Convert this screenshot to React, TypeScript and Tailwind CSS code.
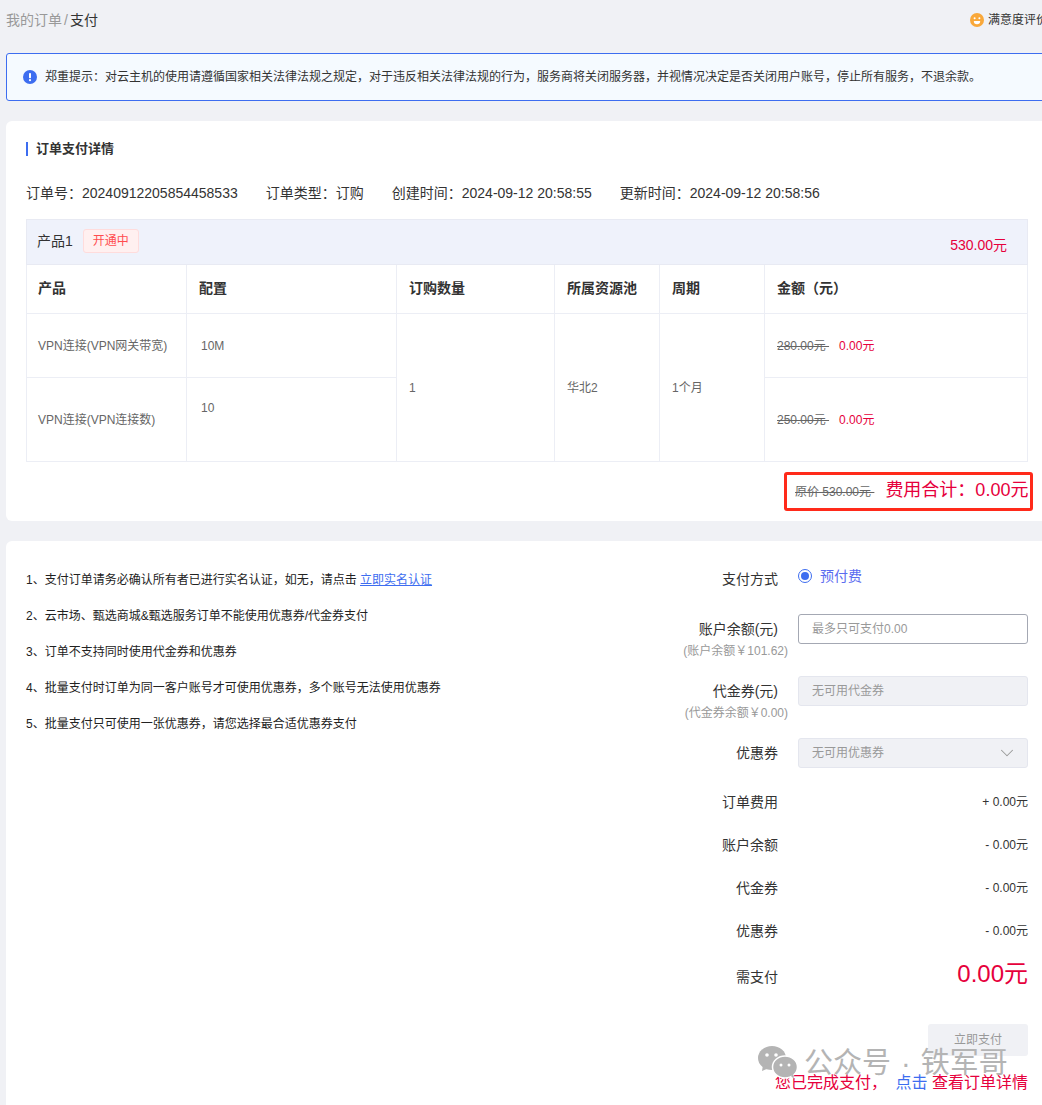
import { ChevronDown } from 'lucide-react';
import type { ReactNode } from 'react';

const notes = [
  '2、云市场、甄选商城&甄选服务订单不能使用优惠券/代金券支付',
  '3、订单不支持同时使用代金券和优惠券',
  '4、批量支付时订单为同一客户账号才可使用优惠券，多个账号无法使用优惠券',
  '5、批量支付只可使用一张优惠券，请您选择最合适优惠券支付',
];

const fees = [
  { label: '订单费用', value: '+ 0.00元' },
  { label: '账户余额', value: '- 0.00元' },
  { label: '代金券', value: '- 0.00元' },
  { label: '优惠券', value: '- 0.00元' },
];

function Smiley() {
  return (
    <svg width="14" height="14" viewBox="0 0 14 14">
      <circle cx="7" cy="7" r="7" fill="#f9a83a" />
      <circle cx="4.6" cy="5.2" r="1" fill="#fff" />
      <circle cx="9.4" cy="5.2" r="1" fill="#fff" />
      <path d="M3.8 8h6.4a3.2 3.2 0 0 1-6.4 0z" fill="#fff" />
    </svg>
  );
}

function InfoIcon() {
  return (
    <svg width="14" height="14" viewBox="0 0 14 14" className="shrink-0">
      <circle cx="7" cy="7" r="7" fill="#3d6df0" />
      <rect x="6" y="3" width="2" height="5.2" rx="0.8" fill="#fff" />
      <circle cx="7" cy="10.2" r="1.1" fill="#fff" />
    </svg>
  );
}

function WechatLogo() {
  return (
    <svg width="39" height="33" viewBox="0 0 39 33">
      <ellipse cx="14" cy="12" rx="14" ry="12" fill="#b4b4b4" />
      <path d="M5 19l-1 6 7-3z" fill="#b4b4b4" />
      <ellipse cx="27" cy="21" rx="12.5" ry="11" fill="#b4b4b4" stroke="#fff" strokeWidth="1.5" />
      <path d="M33 30l3 3-1-6z" fill="#b4b4b4" />
      <circle cx="9" cy="9" r="1.8" fill="#fff" />
      <circle cx="18" cy="9" r="1.8" fill="#fff" />
      <circle cx="23" cy="19" r="1.5" fill="#fff" />
      <circle cx="31" cy="19" r="1.5" fill="#fff" />
    </svg>
  );
}

function FormRow({ label, sub, children }: { label: string; sub?: string; children: ReactNode }) {
  return (
    <div className="flex gap-[10px] h-[62px]">
      <div className="w-[148px] text-right">
        <div className="pr-[10px] text-sm leading-[30px] text-[#333]">{label}</div>
        {sub && <div className="-mt-px text-xs leading-4 text-[#999]">{sub}</div>}
      </div>
      <div className="flex-1">{children}</div>
    </div>
  );
}

export default function App() {
  return (
    <div className="relative h-[1105px] w-[1042px] overflow-hidden bg-[#f0f1f5] pl-[6px] font-['Liberation_Sans','Noto_Sans_CJK_SC',sans-serif]">
      <div className="flex w-[1042px] h-[53px] pt-[10px] justify-between">
        <div className="text-sm leading-5 text-[#999]">
          我的订单<span className="mx-[2px]">/</span><span className="text-[#333]">支付</span>
        </div>
        <div className="flex items-center gap-1 h-5 text-xs text-[#333]">
          <Smiley />
          满意度评价
        </div>
      </div>

      <div className="flex items-center gap-2 w-[1042px] h-12 pl-4 border border-[#3d6df0] rounded-[3px] bg-[#f5faff] text-xs text-[#333]">
        <InfoIcon />
        郑重提示：对云主机的使用请遵循国家相关法律法规之规定，对于违反相关法律法规的行为，服务商将关闭服务器，并视情况决定是否关闭用户账号，停止所有服务，不退余款。
      </div>

      <section className="mt-5 w-[1042px] h-[400px] rounded-md bg-white px-5">
        <div className="pt-[21px] h-[56px]">
          <h2 className="border-l-2 border-[#3d6df0] pl-[8px] text-[13px] leading-[14px] font-bold text-[#333]">订单支付详情</h2>
        </div>
        <div className="flex gap-7 h-[42px] pt-[6px] text-sm leading-5 text-[#333]">
          <span>订单号：20240912205854458533</span>
          <span>订单类型：订购</span>
          <span>创建时间：2024-09-12 20:58:55</span>
          <span>更新时间：2024-09-12 20:58:56</span>
        </div>

        <table className="w-[1001px] table-fixed border-collapse text-xs text-[#666]">
          <colgroup>
            <col className="w-[160px]" />
            <col className="w-[210px]" />
            <col className="w-[158px]" />
            <col className="w-[105px]" />
            <col className="w-[105px]" />
            <col className="w-[263px]" />
          </colgroup>
          <tbody>
            <tr className="h-[45px] bg-[#eff2fb]">
              <td colSpan={6} className="border border-[#e8eaf3] px-[10px]">
                <div className="flex items-center justify-between">
                  <div className="flex items-center gap-[10px] pb-[2px] text-sm text-[#333]">
                    产品1
                    <span className="rounded-[3px] border border-[#ffdcdc] bg-[#fff0f0] px-[9px] text-xs leading-[22px] text-[#ff4d4f]">开通中</span>
                  </div>
                  <span className="mt-[6px] mr-[10px] text-sm text-[#e6003c]">530.00元</span>
                </div>
              </td>
            </tr>
            <tr className="h-[49px] text-left text-sm font-bold text-[#333]">
              <th className="border border-[#eceef5] pl-[11px] pb-[3px] font-bold">产品</th>
              <th className="border border-[#eceef5] px-3 pb-[3px] font-bold">配置</th>
              <th className="border border-[#eceef5] px-3 pb-[3px] font-bold">订购数量</th>
              <th className="border border-[#eceef5] px-3 pb-[3px] font-bold">所属资源池</th>
              <th className="border border-[#eceef5] px-3 pb-[3px] font-bold">周期</th>
              <th className="border border-[#eceef5] px-3 pb-[3px] font-bold">金额（元）</th>
            </tr>
            <tr className="h-[64px]">
              <td className="border border-[#eceef5] pl-[11px]">VPN连接(VPN网关带宽)</td>
              <td className="border border-[#eceef5] px-[14px]">10M</td>
              <td rowSpan={2} className="border border-[#eceef5] px-3">1</td>
              <td rowSpan={2} className="border border-[#eceef5] px-3">华北2</td>
              <td rowSpan={2} className="border border-[#eceef5] px-3">1个月</td>
              <td className="border border-[#eceef5] px-3">
                <span className="line-through">280.00元&nbsp;</span>
                <span className="ml-[10px] text-[#e6003c]">0.00元</span>
              </td>
            </tr>
            <tr className="h-[84px]">
              <td className="border border-[#eceef5] pl-[11px]">VPN连接(VPN连接数)</td>
              <td className="border border-[#eceef5] px-[14px] pb-6">10</td>
              <td className="border border-[#eceef5] px-3">
                <span className="line-through">250.00元&nbsp;</span>
                <span className="ml-[10px] text-[#e6003c]">0.00元</span>
              </td>
            </tr>
          </tbody>
        </table>

        <div className="mt-[10px] flex justify-end -mr-[5px]">
          <div className="flex h-[39px] w-[249px] items-center gap-[11px] rounded-[3px] border-[3px] border-[#ff2a1a] pl-2">
            <span className="text-xs text-[#666] line-through">原价 530.00元&nbsp;</span>
            <span className="-mt-[3px] text-lg text-[#e6003c]">费用合计：0.00元</span>
          </div>
        </div>
      </section>

      <section className="mt-5 flex w-[1042px] h-[564px] justify-between rounded-t-md bg-white px-5 pt-5">
        <div className="pt-px text-xs leading-9 text-[#222]">
          <p>
            1、支付订单请务必确认所有者已进行实名认证，如无，请点击 <a className="text-[#3d6df0] underline">立即实名认证</a>
          </p>
          {notes.map((n) => (
            <p key={n}>{n}</p>
          ))}
        </div>

        <div className="w-[388px]">
          <div className="flex gap-[10px] h-[53px]">
            <div className="w-[148px] pr-[10px] pt-[8px] text-right text-sm leading-5 text-[#333]">支付方式</div>
            <div className="flex items-center gap-2 h-[30px]">
              <span className="flex size-[14px] items-center justify-center rounded-full border border-[#3d6df0]">
                <span className="size-2 rounded-full bg-[#3d6df0]" />
              </span>
              <span className="text-sm text-[#5b6cf0]">预付费</span>
            </div>
          </div>

          <FormRow label="账户余额(元)" sub="(账户余额￥101.62)">
            <div className="flex h-[30px] items-center rounded-[3px] border border-[#a4a8b3] bg-white pl-[13px] text-xs text-[#999]">最多只可支付0.00</div>
          </FormRow>
          <FormRow label="代金券(元)" sub="(代金券余额￥0.00)">
            <div className="flex h-[30px] items-center rounded-[3px] border border-[#e4e6ee] bg-[#f0f1f5] pl-[13px] text-xs text-[#999]">无可用代金券</div>
          </FormRow>
          <FormRow label="优惠券">
            <div className="flex h-[30px] items-center justify-between rounded-[3px] border border-[#e4e6ee] bg-[#f0f1f5] pl-[13px] pr-[9px] text-xs text-[#999]">
              无可用优惠券
              <ChevronDown size={22} strokeWidth={1.1} className="text-[#999]" />
            </div>
          </FormRow>

          <div className="-mt-[20px]">
            {fees.map((f) => (
              <div key={f.label} className="flex h-[43px] items-center justify-between">
                <span className="w-[138px] text-right text-sm text-[#333]">{f.label}</span>
                <span className="text-xs text-[#333]">{f.value}</span>
              </div>
            ))}
            <div className="flex h-[50px] items-center justify-between">
              <span className="w-[138px] text-right text-sm text-[#333]">需支付</span>
              <span className="-mt-[6px] text-2xl text-[#e6003c]">0.00元</span>
            </div>
          </div>

          <div className="mt-[22px] flex justify-end">
            <button className="h-8 w-[100px] rounded-[3px] bg-[#f0f1f5] text-xs text-[#999]">立即支付</button>
          </div>
          <div className="mt-[19px] text-right text-base leading-4 text-[#e6003c]">
            您已完成支付， <a className="ml-[4px] text-[#3d6df0]">点击</a> <a className="text-[#e6003c]">查看订单详情</a>
          </div>
        </div>
      </section>

      <div className="absolute left-[758px] top-[1046px] flex items-center gap-[7px] text-[#b4b4b4]">
        <WechatLogo />
        <span className="text-[29px] leading-6">
          公众号<span className="mx-[10px]">·</span>铁军哥
        </span>
      </div>
    </div>
  );
}
